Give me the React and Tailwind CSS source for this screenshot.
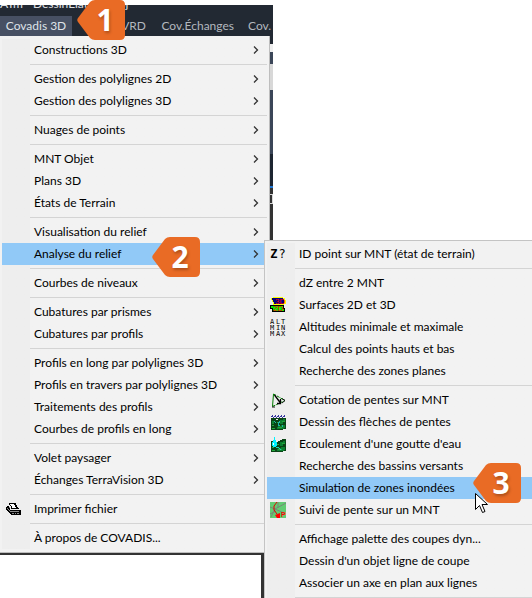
const menu = [
  [{ label: "Constructions 3D", sub: true }],
  [
    { label: "Gestion des polylignes 2D", sub: true },
    { label: "Gestion des polylignes 3D", sub: true }
  ],
  [{ label: "Nuages de points", sub: true }],
  [
    { label: "MNT Objet", sub: true },
    { label: "Plans 3D", sub: true },
    { label: "États de Terrain", sub: true }
  ],
  [
    { label: "Visualisation du relief", sub: true },
    { label: "Analyse du relief", sub: true, active: true, step: 2 }
  ],
  [{ label: "Courbes de niveaux", sub: true }],
  [
    { label: "Cubatures par prismes", sub: true },
    { label: "Cubatures par profils", sub: true }
  ],
  [
    { label: "Profils en long par polylignes 3D", sub: true },
    { label: "Profils en travers par polylignes 3D", sub: true },
    { label: "Traitements des profils", sub: true },
    { label: "Courbes de profils en long", sub: true }
  ],
  [
    { label: "Volet paysager", sub: true },
    { label: "Échanges TerraVision 3D", sub: true }
  ],
  [{ label: "Imprimer fichier", icon: PrinterIcon }],
  [{ label: "À propos de COVADIS..." }]
];

const submenu = [
  [{ label: "ID point sur MNT (état de terrain)", icon: ZIcon }],
  [
    { label: "dZ entre 2 MNT" },
    { label: "Surfaces 2D et 3D", icon: SurfacesIcon },
    { label: "Altitudes minimale et maximale", icon: AltIcon },
    { label: "Calcul des points hauts et bas" },
    { label: "Recherche des zones planes" }
  ],
  [
    { label: "Cotation de pentes sur MNT", icon: SlopeIcon },
    { label: "Dessin des flèches de pentes", icon: ArrowsIcon },
    { label: "Ecoulement d'une goutte d'eau", icon: DropIcon },
    { label: "Recherche des bassins versants" },
    { label: "Simulation de zones inondées", active: true, step: 3 },
    { label: "Suivi de pente sur un MNT", icon: TrackIcon }
  ],
  [
    { label: "Affichage palette des coupes dyn..." },
    { label: "Dessin d'un objet ligne de coupe" },
    { label: "Associer un axe en plan aux lignes" }
  ],
  []
];

function PrinterIcon() {
  return (
    <svg width="15" height="13" viewBox="0 0 15 13" shapeRendering="crispEdges">
      <path d="M3 0h6l1 1v1h1v2l2 2H5V4L3 2z" fill="#000" />
      <path d="M4 1h4v1h1v2h1v1H6V3H5V2H4z" fill="#fff" />
      <path d="M1 3h2v2h1v2h10l1 1v4H5L0 7V4z" fill="#000" />
      <path d="M1 5h1v1h1v1h1v1h9v1H4V8H3V7H2V6H1zM6 10h2v1H6zM9 10h1v1H9zM11 10h2v1h-2zM3 4h1v1H3z" fill="#8a8a8a" />
    </svg>
  );
}

function ZIcon() {
  return (
    <span className="flex gap-px font-['DejaVu_Sans_Mono',monospace] text-xs leading-3">
      <b>Z</b>
      <span>?</span>
    </span>
  );
}

function SurfacesIcon() {
  return (
    <svg width="16" height="16" viewBox="0 0 16 16">
      <g shapeRendering="crispEdges">
        <path d="M3 0h10v1h2v2h1v4h-2v2h-3V8H3V5H2V3H1V1h2z" fill="#ff0" />
        <path d="M2 1h11v1h1v5H4V5H3V3H2z" fill="#000080" />
        <path d="M0 8h14v3h1v4H2v-3H0z" fill="#000" />
        <path d="M1 9h12v3h1v2H3v-3H1z" fill="#0e0" />
      </g>
      <g fill="#f00" fontFamily="Liberation Sans" fontSize="8">
        <text x="5" y="7">3D</text>
        <text x="3" y="14">2D</text>
      </g>
    </svg>
  );
}

function AltIcon() {
  return (
    <svg width="16" height="18" viewBox="0 0 16 18" fontFamily="DejaVu Sans Mono" fontSize="7">
      <text x="0 6 11" y="6">ALT</text>
      <text x="0 6 11" y="12">MIN</text>
      <text x="0 6 11" y="18">MAX</text>
    </svg>
  );
}

function SlopeIcon() {
  return (
    <svg width="15" height="15" viewBox="0 0 15 15" fill="none">
      <path d="M2.500 1L1.500 13.500" stroke="#007a00" />
      <path d="M2.500 1L14 7.500L1.500 13.500" stroke="#007a00" strokeDasharray="3 1" />
      <path d="M3.500 2L9.500 10M9.500 6v4.500H6" stroke="#000" strokeWidth="1.3" />
      <path d="M11 5.500l3 2-3 2.500M1 14h3" stroke="#111" />
    </svg>
  );
}

function Terrain() {
  return (
    <>
      <path d="M0 4h4l2 1 4-2 2-1h3v12h-3v1H0z" fill="#0a4416" />
      <path d="M1 6h3v1H3v2H1zM5 13l2-2h3v-1h4v2l-2 2H6zM9 5h3V4h2v3h-2v2H9z" fill="#0b8030" />
      <path d="M1 13h3v1H1zM7 12h4v1H7zM11 6h3v1h-3zM1 10h2v1H1zM6 7h2v1H6z" fill="#22a83c" />
    </>
  );
}

function ArrowsIcon() {
  return (
    <svg width="15" height="15" viewBox="0 0 15 15" shapeRendering="crispEdges">
      <Terrain />
      <path d="M0 0h15v3H0z" fill="#f2f2f2" />
      <path d="M0 1h2v1H0zM3 1h2v1H3zM6 1h2v1H6zM9 1h2v1H9zM12 1h2v1h-2zM1 0h1v1H1zM4 0h1v1H4zM7 0h1v1H7zM10 0h1v1h-1zM13 0h1v1h-1zM2 2h1v1H2zM5 2h1v1H5zM8 2h1v1H8zM11 2h1v1h-1z" fill="#3838a0" />
      <path d="M0 3h15v1H0z" fill="#0a4416" />
      <path d="M3 6l2 2M9 6L7 9M7 7v3h2M12 10l-1 2" stroke="#20b8a8" fill="none" />
    </svg>
  );
}

function DropIcon() {
  return (
    <svg width="15" height="15" viewBox="0 0 15 15" shapeRendering="crispEdges">
      <Terrain />
      <path d="M3 0h1v3h1v2h1v4H5v1H2V9H1V5h1V3h1z" fill="#00f4ff" />
      <path d="M2 6h1v2H2z" fill="#fff" />
      <path d="M5 10l3 1 2 2" stroke="#20d8b0" fill="none" />
    </svg>
  );
}

function TrackIcon() {
  return (
    <svg width="16" height="16" viewBox="0 0 16 16" fill="none">
      <path d="M0 0h16v16H0z" fill="#62cc72" />
      <path d="M0 5l5 2L16 1M5 7l-4 8M5 7l9 4M8 0v6M0 12l6-3" stroke="#7b8578" />
      <path d="M7 0L4 4v4l3 4" stroke="#e00000" />
      <path d="M5 13l5-2v5H7z" fill="#f00" />
      <text x="11" y="15" fill="#f00" fontFamily="Liberation Sans" fontWeight="bold" fontSize="7">P</text>
    </svg>
  );
}

function StepBadge({ step }) {
  return (
    <span className="relative block h-10 w-12">
      <svg className="block" width="48" height="40" viewBox="0 0 48 40">
        <path d="M13 2Q15 0 18 0H43Q48 0 48 5V35Q48 40 43 40H18Q15 40 13 38L1 22Q-.5 20 1 18Z" fill="#e96b25" />
      </svg>
      <span className="absolute inset-y-0 left-5 flex w-4 items-center justify-center font-['Noto_Sans',sans-serif] text-3xl font-bold text-white [text-shadow:1px_2px_3px_#0004]">
        {step}
      </span>
    </span>
  );
}

function Cursor() {
  return (
    <svg width="13" height="21" viewBox="0 0 13 21">
      <path d="M.5.5v16l4-4 3 7 2.500-1-3-7h5.500z" fill="#fff" stroke="#000" />
    </svg>
  );
}

function MenuItem({ item }) {
  const Icon = item.icon;
  return (
    <li className="relative">
      <button
        type="button"
        className={`flex h-[22px] w-full items-center text-left ${item.active ? "bg-[#91c9f7]" : ""}`}
      >
        <span className="flex w-7 shrink-0 items-center justify-center pr-1.5">{Icon ? <Icon /> : null}</span>
        <span className="flex-1 pl-1 whitespace-nowrap">{item.label}</span>
        {item.sub ? (
          <svg className="mr-2" width="6" height="8" viewBox="0 0 6 8" fill="none" stroke="#333" strokeWidth="1.3">
            <path d="M1 .5L4.500 4L1 7.500" />
          </svg>
        ) : null}
      </button>
      {item.step === 2 ? (
        <span className="absolute -top-1.5 left-[150px] z-20">
          <StepBadge step={2} />
        </span>
      ) : null}
      {item.step === 3 ? (
        <>
          <span className="absolute -top-3.5 left-[206px] z-20">
            <StepBadge step={3} />
          </span>
          <span className="absolute top-4 left-[208px] z-30">
            <Cursor />
          </span>
        </>
      ) : null}
    </li>
  );
}

function Menu({ groups }) {
  return (
    <div className="bg-linear-to-r from-[#eeeeee] from-[28px] to-[#f2f2f2] to-[28px]">
      {groups.map((group, index) => (
        <div key={index}>
          {index > 0 ? <hr className="my-[3px] ml-7 border-t border-[#d4d4d4]" /> : null}
          <ul>
            {group.map((item) => (
              <MenuItem key={item.label} item={item} />
            ))}
          </ul>
        </div>
      ))}
    </div>
  );
}

export default function App() {
  return (
    <div className="relative h-screen overflow-hidden bg-white pt-[5px] font-['Lato','Open_Sans',sans-serif] text-xs text-black">
      <div className="w-[273px] bg-[#222933]">
        <div className="flex h-[11px] items-end gap-2.5 overflow-hidden text-[#e0e2e5]">
          <p className="h-5 leading-4">ATm</p>
          <p className="h-5 leading-4 whitespace-nowrap">DessinElat2022.oj</p>
        </div>
        <nav className="flex h-5 items-center overflow-hidden whitespace-nowrap text-[#b3b8bf]">
          <button type="button" className="h-full w-[72px] shrink-0 bg-[#475063] text-center text-[#dfe3e9]">
            Covadis 3D
          </button>
          <button type="button" className="w-[74px] shrink-0 text-right">Cov.VRD</button>
          <button type="button" className="w-[88px] shrink-0 text-right">Cov.Échanges</button>
          <button type="button" className="pl-3.5">Cov.</button>
        </nav>
        <div className="flex">
          <div className="w-[270px] border-r border-b border-[#bdbdbd] bg-[#f2f2f2] py-[3px] pr-0.5 pl-0.5">
            <Menu groups={menu} />
          </div>
          <div className="flex w-[3px] flex-col">
            <span className="h-2 bg-[#222933]" />
            <span className="h-2 bg-[#eeeeee]" />
            <span className="h-3 bg-[#3b4658]" />
            <span className="h-[26px] bg-[#d8d8d8]" />
            <span className="h-16 bg-[#3b4658]" />
            <span className="h-8 bg-[#1d2531]" />
            <span className="h-0.5 bg-[#1c75d4]" />
            <span className="h-1.5 bg-[#333333]" />
            <span className="h-2.5 border-y border-r border-[#d8d8d8] bg-[#333333]" />
            <span className="flex-1 bg-[#333333]" />
          </div>
        </div>
      </div>
      <div className="h-20 w-[264px] border-t-2 border-r-[3px] border-[#333333] bg-white" />

      <div className="absolute top-0 left-[77px] z-20">
        <StepBadge step={1} />
      </div>
      <div className="absolute top-[240px] right-0 bottom-0 left-[264px] z-10 overflow-hidden border-t border-l border-[#c4c4c4] bg-[#f2f2f2] pt-0.5 pl-0.5">
        <Menu groups={submenu} />
      </div>
    </div>
  );
}
